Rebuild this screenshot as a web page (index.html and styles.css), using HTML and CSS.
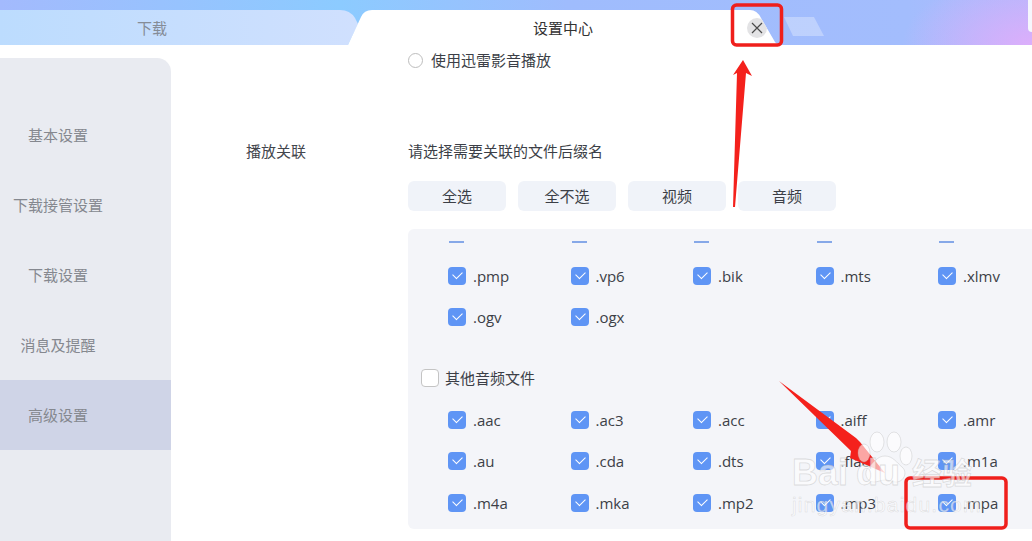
FILE: index.html
```html
<!DOCTYPE html>
<html lang="zh-CN">
<head>
<meta charset="utf-8">
<title>设置中心</title>
<link rel="stylesheet" href="styles.css">
</head>
<body>
<div class="app">
  <header class="titlebar">
    <div class="tab tab-inactive"><span>下载</span></div>
    <div class="tab tab-active">
      <span>设置中心</span>
      <button class="tab-close" aria-label="关闭">
        <svg viewBox="0 0 12 12" width="12" height="12"><path d="M1 1L11 11M11 1L1 11" stroke="#4a4a4a" stroke-width="1.2" fill="none"/></svg>
      </button>
    </div>
    <div class="tab-new"></div>
    <div class="corner-btn"></div>
  </header>
  <div class="content">
    <nav class="sidebar">
      <div class="nav-item">基本设置</div>
      <div class="nav-item">下载接管设置</div>
      <div class="nav-item">下载设置</div>
      <div class="nav-item">消息及提醒</div>
      <div class="nav-item active">高级设置</div>
    </nav>
    <main class="main">
      <div class="radio-row"><span class="radio"></span><span class="lift">使用迅雷影音播放</span></div>
      <section class="assoc">
        <div class="assoc-label">播放关联</div>
        <div class="assoc-body">
          <div class="assoc-hint">请选择需要关联的文件后缀名</div>
          <div class="btn-row">
            <button class="btn">全选</button>
            <button class="btn">全不选</button>
            <button class="btn">视频</button>
            <button class="btn">音频</button>
          </div>
          <div class="panel">
            <div class="grid clipped">
              <span class="stub"></span><span class="stub"></span><span class="stub"></span><span class="stub"></span><span class="stub"></span>
            </div>
            <div class="grid first">
              <label class="item"><span class="box on"></span>.pmp</label>
              <label class="item"><span class="box on"></span>.vp6</label>
              <label class="item"><span class="box on"></span>.bik</label>
              <label class="item"><span class="box on"></span>.mts</label>
              <label class="item"><span class="box on"></span>.xlmv</label>
              <label class="item"><span class="box on"></span>.ogv</label>
              <label class="item"><span class="box on"></span>.ogx</label>
            </div>
            <div class="group-head"><span class="box off"></span><span class="lift">其他音频文件</span></div>
            <div class="grid audio">
              <label class="item"><span class="box on"></span>.aac</label>
              <label class="item"><span class="box on"></span>.ac3</label>
              <label class="item"><span class="box on"></span>.acc</label>
              <label class="item"><span class="box on"></span>.aiff</label>
              <label class="item"><span class="box on"></span>.amr</label>
              <label class="item"><span class="box on"></span>.au</label>
              <label class="item"><span class="box on"></span>.cda</label>
              <label class="item"><span class="box on"></span>.dts</label>
              <label class="item"><span class="box on"></span>.flac</label>
              <label class="item"><span class="box on"></span>.m1a</label>
              <label class="item"><span class="box on"></span>.m4a</label>
              <label class="item"><span class="box on"></span>.mka</label>
              <label class="item"><span class="box on"></span>.mp2</label>
              <label class="item"><span class="box on"></span>.mp3</label>
              <label class="item"><span class="box on"></span>.mpa</label>
            </div>
          </div>
        </div>
      </section>
    </main>
  </div>
  <svg class="annot" viewBox="0 0 1032 541" width="1032" height="541">
    <g class="mark">
      <rect x="732.5" y="5" width="49" height="40" rx="4"/>
      <rect x="906" y="478" width="100" height="50" rx="4"/>
    </g>
    <polygon class="arrow" points="733,207 737,73 733,75 743,60 752,76 746,73 735,207"/>
    <polygon class="arrow" points="779,381 856,438 860,442 885,473 850,458 851,451"/>
    <g class="wm">
      <ellipse cx="877" cy="442" rx="7" ry="10"/>
      <ellipse cx="894" cy="442" rx="7" ry="10"/>
      <ellipse cx="864" cy="453" rx="6" ry="9"/>
      <ellipse cx="906" cy="456" rx="6" ry="9"/>
      <path d="M885 456c-8 0-11 7-16 11-6 5-3 15 5 15 4 0 7-2 11-2s7 2 11 2c8 0 12-10 6-15-5-4-9-11-17-11z"/>
      <text class="wm-big" x="792" y="485">Bai</text>
      <text class="wm-big" x="856" y="485">du</text>
      <text class="wm-cn" x="912" y="484">经验</text>
      <text class="wm-url" x="792" y="512">jingyan.baidu.com</text>
    </g>
  </svg>
</div>
</body>
</html>
```
FILE: styles.css
```css
* { box-sizing: border-box; }
html, body { margin: 0; height: 100%; overflow: hidden; background: #fff; }
body { font-family: "Open Sans", "Noto Sans CJK SC", "Liberation Sans", sans-serif; font-size: 15px; color: #3c3f47; }
.app { position: relative; width: 1032px; height: 541px; overflow: hidden; }
.lift { margin-bottom: 2px; }

.titlebar {
  position: relative;
  display: flex;
  height: 45px;
  background:
    radial-gradient(130px 70px at 1032px 45px, #dcaefb 0%, rgba(220,174,251,0) 100%),
    linear-gradient(90deg, #a3bafd 0%, #8ccbff 33%, #9fbcfd 55%, #a3bdfd 88%, #b3b8fc 100%);
}
.tab { display: flex; align-items: center; justify-content: center; height: 35px; margin-top: 10px; font-size: 15px; }
.tab-inactive {
  width: 358px;
  padding-right: 54px;
  color: #858c97;
  background: linear-gradient(90deg, #bcdcfe 0%, #c6defe 50%, #d0e0fe 100%);
  clip-path: path("M0 0H340Q350 0 355 8L358 14L348 35H0Z");
}
.tab-active {
  position: relative;
  width: 434px;
  margin-left: -10px;
  color: #333;
  background: #fff;
  clip-path: path("M0 35L13 7Q16 0 24 0H402Q409 0 413 8L427 32Q429 35 434 35Z");
}
.tab-active span { transform: translateX(-2px); }
.tab-close {
  position: absolute;
  left: 399px;
  top: 8px;
  display: flex;
  align-items: center;
  justify-content: center;
  width: 20px;
  height: 20px;
  padding: 0;
  border: 0;
  border-radius: 50%;
  background: #e3e3e5;
}
.tab-new {
  width: 40px;
  height: 19px;
  margin: 17px 0 0 2px;
  background: rgba(255,255,255,.3);
  clip-path: polygon(0 0, 30px 0, 40px 19px, 9px 19px);
}
.corner-btn { position: absolute; right: -6px; top: -4px; width: 10px; height: 36px; border-radius: 4px; background: #f6f7fd; }

.content { display: flex; height: 496px; }
.sidebar {
  flex: none;
  width: 171px;
  margin-top: 13px;
  padding-top: 42px;
  background: #e9ebf1;
  border-radius: 0 14px 0 0;
  color: #85888f;
}
.nav-item { display: flex; align-items: center; justify-content: center; height: 70px; padding: 0 55px 2px 0; white-space: nowrap; }
.nav-item.active { background: #cfd4e7; }

.main { flex: 1; min-width: 0; padding-left: 75px; }
.radio-row { display: flex; align-items: center; gap: 8px; height: 30px; margin-left: 162px; }
.radio { width: 15px; height: 15px; border: 1px solid #bdbdbd; border-radius: 50%; background: #fff; }
.assoc { display: flex; margin-top: 64px; }
.assoc-label { flex: none; width: 162px; height: 24px; line-height: 24px; color: #43464d; }
.assoc-body { flex: 1; min-width: 0; }
.assoc-hint { height: 24px; line-height: 24px; }
.btn-row { display: flex; gap: 12px; margin-top: 18px; }
.btn {
  width: 98px;
  height: 30px;
  padding: 0 0 2px;
  border: 0;
  border-radius: 6px;
  background: #f0f3f9;
  color: #3c3f47;
  font: inherit;
}
.panel { height: 300px; margin-top: 18px; padding-left: 13px; background: #f4f5f9; border-radius: 6px 0 0 6px; overflow: hidden; }
.grid { display: grid; grid-template-columns: repeat(5, 122.5px); grid-auto-rows: 41.5px; margin-left: 27px; }
.grid.clipped { grid-auto-rows: 14px; height: 14px; align-items: end; }
.stub { display: block; width: 15px; height: 2px; margin-left: 1px; background: #86a8e8; }
.grid.first { margin-top: 12px; }
.grid.audio { margin-top: 9px; }
.item { display: flex; align-items: center; gap: 7px; }
.box { position: relative; flex: none; display: block; width: 18px; height: 18px; border-radius: 4px; }
.box.on { background: #5f95f5; }
.box.on::after {
  content: "";
  position: absolute;
  left: 5px;
  top: 4px;
  width: 8px;
  height: 5px;
  border-left: 1.3px solid #fff;
  border-bottom: 1.3px solid #fff;
  transform: rotate(-45deg);
}
.box.off { background: #fff; border: 1px solid #c4c4c4; }
.group-head { display: flex; align-items: center; gap: 6px; height: 24px; margin-top: 28px; }

.annot { position: absolute; left: 0; top: 0; pointer-events: none; }
.mark rect { fill: none; stroke: #ef1f1c; stroke-width: 3.5; }
.arrow { fill: #f4211c; }
.wm { fill: rgba(255,255,255,.6); stroke: rgba(175,175,175,.4); stroke-width: .8; }
.wm-big { font-family: "Liberation Sans", sans-serif; font-weight: 700; font-size: 36px; }
.wm-cn { font-family: "Noto Sans CJK SC", sans-serif; font-weight: 700; font-size: 30px; }
.wm-url { font-family: "Liberation Sans", sans-serif; font-size: 21px; letter-spacing: 1.2px; stroke-width: .5; }
```
